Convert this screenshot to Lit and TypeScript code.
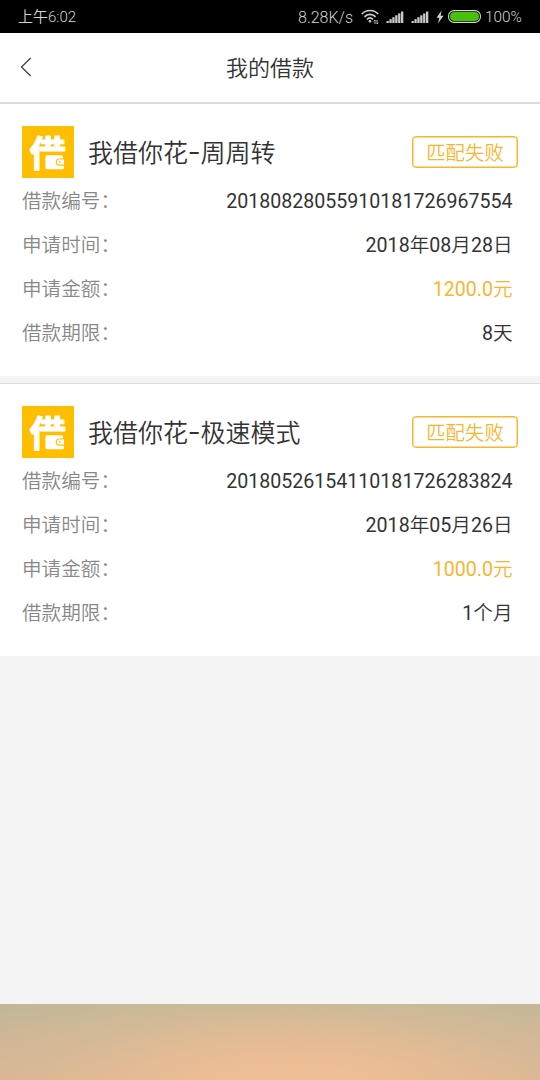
import { LitElement, html, css, svg } from "lit";
import { customElement, property } from "lit/decorators.js";

interface Loan {
  name: string;
  status: string;
  id: string;
  date: string;
  amount: string;
  term: string;
}

const loans: Loan[] = [
  { name: "我借你花-周周转", status: "匹配失败", id: "20180828055910181726967554", date: "2018年08月28日", amount: "1200.0元", term: "8天" },
  { name: "我借你花-极速模式", status: "匹配失败", id: "20180526154110181726283824", date: "2018年05月26日", amount: "1000.0元", term: "1个月" },
];

const signal = () => html`<svg class="signal" width="18" height="14" viewBox="0 0 18 14">
  ${[0, 1, 2, 3, 4, 5].map((i) => svg`<rect x=${0.5 + i * 2.9} y=${11 - i * 1.9} width="2.3" height=${2 + i * 1.9} fill="#c9c9c9" />`)}
</svg>`;

@customElement("status-bar")
export class StatusBar extends LitElement {
  static styles = css`
    :host {
      display: flex;
      align-items: center;
      height: 33px;
      box-sizing: border-box;
      padding: 0 18px 0 18px;
      background: #000;
      color: #d4d4d4;
      font: 350 15px/33px Roboto, "Noto Sans CJK SC", sans-serif;
      white-space: nowrap;
    }
    span { padding-top: 1px; }
    .time { flex: 1; font-size: 15px; }
    .speed { width: 56px; font-size: 16px; margin-right: 7px; }
    .wifi { margin-right: 7px; }
    .signal { margin-right: 7px; }
    .bolt { margin-right: 4px; }
    .battery { margin-right: 4px; }
    .percent { width: 37px; font-size: 15.3px; }
    svg { display: block; flex: none; }
  `;
  render() {
    return html`
      <span class="time">上午6:02</span>
      <span class="speed">8.28K/s</span>
      <svg class="wifi" width="18" height="16" viewBox="0 0 18 16" fill="none" stroke="#cfcfcf" stroke-width="1.7">
        <path d="M.8 5C5.2.3 12.8.3 17.2 5M3.4 7.8C6.5 4.5 11.5 4.5 14.6 7.8M6 10.4c1.8-1.800 4.200-1.800 6 0" />
        <circle cx="9" cy="12.2" r="1.3" fill="#cfcfcf" stroke="none" />
        <path d="M14 11v4m-1.3-2.7L14 11M16 11v4m0 0l1.3-1.3" stroke-width=".9" />
      </svg>
      ${signal()}${signal()}
      <svg class="bolt" width="8" height="14" viewBox="0 0 8 14"><path d="M5.6.6L.5 7.800h2.800L2 13.400l5.500-7.600H4.600z" fill="#cfcfcf" /></svg>
      <svg class="battery" width="33" height="13" viewBox="0 0 33 13">
        <rect x=".6" y=".6" width="31.8" height="11.8" rx="5.5" fill="#000" stroke="#d4dccf" stroke-width="1.1" />
        <rect x="2" y="2" width="29" height="9" rx="4.3" fill="#49c00d" />
      </svg>
      <span class="percent">100%</span>
    `;
  }
}

@customElement("loan-card")
export class LoanCard extends LitElement {
  @property({ attribute: false }) loan!: Loan;

  static styles = css`
    :host {
      display: block;
      height: 272px;
      box-sizing: border-box;
      padding: 22px 22px 0;
      background: #fff;
      color: #333;
    }
    .head { display: flex; align-items: center; height: 52px; margin-bottom: 1px; }
    .logo { display: block; flex: none; overflow: visible; }
    .mark { font: 700 36px "Noto Sans CJK SC", sans-serif; }
    .name { flex: 1; margin-left: 14px; padding-top: 4px; font-size: 25px; line-height: 52px; font-weight: 350; }
    .dash { display: inline-block; width: 12.5px; text-align: center; font-weight: 400; transform: translateY(-1px) scaleX(1.5); }
    .badge {
      width: 106px;
      height: 32px;
      box-sizing: border-box;
      border: 1px solid #f8b62f;
      box-shadow: inset 0 0 0 0.5px #f8b62f;
      border-radius: 4px;
      color: #f8b62f;
      font-size: 19.4px;
      font-weight: 350;
      line-height: 33px;
      text-align: center;
    }
    .row { display: flex; justify-content: space-between; height: 44px; line-height: 46px; font-size: 19.6px; padding-right: 5.5px; }
    .label { color: #888; font-weight: 350; }
    .value { font-weight: 350; }
    .num { font-weight: 400; }
    .money { color: #f8b62f; }
  `;
  render() {
    const l = this.loan;
    const mixed = (value: string) =>
      value.split(/([\d.]+)/).filter(Boolean).map((part) => (/\d/.test(part) ? html`<span class="num">${part}</span>` : part));
    const row = (label: string, value: string, money = false) => html`
      <div class="row">
        <span class="label">${label}：</span>
        <span class="value ${money ? "money" : ""}">${mixed(value)}</span>
      </div>`;
    const [brand, product] = l.name.split("-");
    return html`
      <div class="head">
        <svg class="logo" width="52" height="52" viewBox="0 0 52 52">
          <rect width="52" height="52" fill="#ffbe00" />
          <text class="mark" x="7.8" y="40.8" fill="#fff" stroke="#fff" stroke-width="1.2" stroke-linejoin="round">借</text>
          <path d="M20 26.400h25V46H20z" fill="#ffbe00" />
          <path d="M25 29.200h14.500q1.500 0 1.500 1.500v1.800h-3.700a3.600 3.600 0 0 0 0 7.200H42v2q0 1.600-1.600 1.600H25q-1.600 0-1.600-1.600V30.800q0-1.600 1.600-1.600z" fill="#fff" />
          <path d="M37.300 33.600H42v5h-4.700a2.500 2.500 0 0 1 0-5z" fill="#fff" />
          <circle cx="37.600" cy="36.100" r=".9" fill="#ffbe00" />
        </svg>
        <span class="name">${brand}<span class="dash">-</span>${product}</span>
        <span class="badge">${l.status}</span>
      </div>
      ${row("借款编号", l.id)}${row("申请时间", l.date)}${row("申请金额", l.amount, true)}${row("借款期限", l.term)}
    `;
  }
}

@customElement("app-root")
export class AppRoot extends LitElement {
  static styles = css`
    :host {
      display: flex;
      flex-direction: column;
      width: 540px;
      height: 1080px;
      overflow: hidden;
      background: #f4f4f4;
      font-family: Roboto, "Noto Sans CJK SC", sans-serif;
      font-weight: 350;
    }
    .header {
      display: grid;
      grid-template-columns: 60px 1fr 60px;
      align-items: center;
      height: 71px;
      box-sizing: border-box;
      border-bottom: 2px solid #dcdcdc;
      background: #fff;
      color: #333;
    }
    .back { display: block; margin-left: 20px; margin-bottom: 2px; }
    .title { text-align: center; font-size: 22px; line-height: 69px; padding-top: 1px; }
    .list { flex: 1; display: flex; flex-direction: column; }
    .gap { height: 8px; box-sizing: border-box; border-bottom: 1px solid #dcdcdc; }
    .footer {
      height: 76px;
      background:
        radial-gradient(ellipse 400px 130px at 295px 86px, #f2be94 0%, rgba(238, 190, 149, 0.9) 25%, rgba(222, 189, 151, 0.45) 65%, rgba(210, 186, 152, 0) 100%),
        linear-gradient(180deg, #bfb798 0%, #d8b395 100%);
    }
  `;
  render() {
    return html`
      <status-bar></status-bar>
      <header class="header">
        <svg class="back" width="14" height="22" viewBox="0 0 14 22" fill="none" stroke="#444" stroke-width="1.3">
          <path d="M10.700 2L1.500 11l9.200 9" />
        </svg>
        <span class="title">我的借款</span>
      </header>
      <main class="list">
        ${loans.map((l, i) => html`${i ? html`<div class="gap"></div>` : ""}<loan-card .loan=${l}></loan-card>`)}
      </main>
      <div class="footer"></div>
    `;
  }
}
